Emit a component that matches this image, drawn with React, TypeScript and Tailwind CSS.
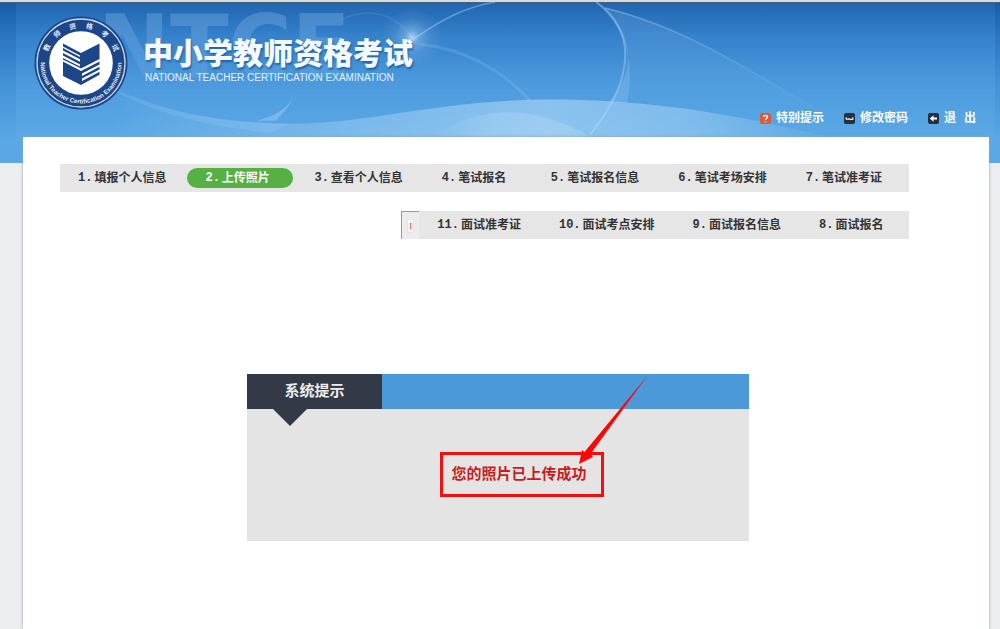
import React from "react";

type Step = { no: number; label: string; active?: boolean };

const writtenSteps: Step[] = [
  { no: 1, label: "填报个人信息" },
  { no: 2, label: "上传照片", active: true },
  { no: 3, label: "查看个人信息" },
  { no: 4, label: "笔试报名" },
  { no: 5, label: "笔试报名信息" },
  { no: 6, label: "笔试考场安排" },
  { no: 7, label: "笔试准考证" },
];

const interviewSteps: Step[] = [
  { no: 11, label: "面试准考证" },
  { no: 10, label: "面试考点安排" },
  { no: 9, label: "面试报名信息" },
  { no: 8, label: "面试报名" },
];

function Emblem() {
  return (
    <svg viewBox="0 0 94 94" className="h-[94px] w-[94px] shrink-0" role="img" aria-label="NTCE">
      <defs>
        <path id="arcTop" d="M12 47 A35 35 0 0 1 82 47" />
        <path id="arcBottom" d="M6.500 47 A40.500 40.500 0 0 0 87.500 47" />
      </defs>
      <circle cx="47" cy="47" r="46.500" fill="#1c4687" />
      <circle cx="47" cy="47" r="44" fill="none" stroke="#c3d8ef" strokeWidth="1.300" />
      <circle cx="47" cy="47" r="31.800" fill="#fff" />
      <text fill="#e3edf8" fontSize="7" fontWeight="700" fontFamily="'Noto Sans CJK SC', sans-serif">
        {["教", "师", "资", "格", "考", "试"].map((c, i) => (
          <textPath key={c} href="#arcTop" startOffset={`${13.5 + i * 14.6}%`} textAnchor="middle">
            {c}
          </textPath>
        ))}
      </text>
      <text fill="#e3edf8" fontSize="6.300" fontWeight="700" fontFamily="'Liberation Sans', sans-serif">
        <textPath href="#arcBottom" startOffset="50%" textAnchor="middle">
          National Teacher Certification Examination
        </textPath>
      </text>
      <g fill="#1c4687">
        <path d="M29 27.500 L47 37 L65.500 27.500 V43 L47 52.500 L29 43.500 V42 L46 50.500 V48.500 L29 39.500 V37 L46 45.800 V43.300 L29 34.500 V32 L46 41 V39.500 L29 30.500 Z" />
        <path d="M29 45.500 L47 55 L65.500 45.500 V48.500 L48 57.500 V60 L65.500 50.800 V53.600 L48 62.500 V65 L65.500 55.800 V58.800 L47 69 L29 60 Z" />
      </g>
    </svg>
  );
}

function HeaderScene() {
  return (
    <svg
      viewBox="0 0 1000 160"
      preserveAspectRatio="none"
      className="absolute inset-0 h-full w-full"
      aria-hidden="true"
    >
      <defs>
        <linearGradient id="sky" x1="0" y1="0" x2="0" y2="1">
          <stop offset="0" stopColor="#2064ae" />
          <stop offset="0.2" stopColor="#3480ca" />
          <stop offset="0.5" stopColor="#4c9add" />
          <stop offset="0.85" stopColor="#5ca9e6" />
          <stop offset="1" stopColor="#5ca7e3" />
        </linearGradient>
        <linearGradient id="edge" x1="0" y1="0" x2="0" y2="1">
          <stop offset="0" stopColor="#0a4c98" stopOpacity="0.35" />
          <stop offset="1" stopColor="#2f86d0" stopOpacity="0" />
        </linearGradient>
        <linearGradient id="mark" x1="0" y1="0" x2="0" y2="1">
          <stop offset="0" stopColor="#8fc0f0" stopOpacity="0.36" />
          <stop offset="1" stopColor="#8fc0f0" stopOpacity="0.1" />
        </linearGradient>
        <linearGradient id="hill" x1="0" y1="0" x2="1" y2="0">
          <stop offset="0" stopColor="#b0d8f7" stopOpacity="0" />
          <stop offset="0.35" stopColor="#b0d8f7" stopOpacity="0.4" />
          <stop offset="0.6" stopColor="#b0d8f7" stopOpacity="0.6" />
          <stop offset="0.8" stopColor="#b0d8f7" stopOpacity="0.45" />
          <stop offset="1" stopColor="#b0d8f7" stopOpacity="0" />
        </linearGradient>
        <linearGradient id="inner" x1="0" y1="0" x2="1" y2="0">
          <stop offset="0" stopColor="#d8ecfb" stopOpacity="0" />
          <stop offset="0.4" stopColor="#d8ecfb" stopOpacity="0.2" />
          <stop offset="1" stopColor="#d8ecfb" stopOpacity="0.2" />
        </linearGradient>
        <linearGradient id="wing" x1="0" y1="0" x2="1" y2="0">
          <stop offset="0" stopColor="#b9dcf8" stopOpacity="0.5" />
          <stop offset="1" stopColor="#b9dcf8" stopOpacity="0.05" />
        </linearGradient>
        <linearGradient id="veil" x1="0" y1="0" x2="0" y2="1">
          <stop offset="0" stopColor="#8ec4f1" stopOpacity="0.2" />
          <stop offset="1" stopColor="#8ec4f1" stopOpacity="0" />
        </linearGradient>
        <radialGradient id="flare">
          <stop offset="0" stopColor="#e4f4ff" stopOpacity="0.7" />
          <stop offset="0.25" stopColor="#b5dbf8" stopOpacity="0.35" />
          <stop offset="0.6" stopColor="#b5dbf8" stopOpacity="0.1" />
          <stop offset="1" stopColor="#b5dbf8" stopOpacity="0" />
        </radialGradient>
      </defs>
      <rect width="1000" height="160" fill="url(#sky)" />
      <rect width="16" height="160" fill="url(#edge)" />
      <rect x="995" width="5" height="160" fill="url(#edge)" />
      <rect width="1000" height="1" fill="#4b6078" />
      <text
        x="98"
        y="75"
        fontSize="86"
        fontWeight="700"
        fontFamily="'DejaVu Sans', sans-serif"
        fill="url(#mark)"
      >
        NTCE
      </text>
      <path d="M107 84 C150 102 200 120 290 121 C370 121 440 97 550 97 C670 97 760 118 840 137 L107 137 Z" fill="url(#hill)" />
      <path d="M107 84 C150 102 200 120 290 121 L270 130 C190 122 140 104 107 84 Z" fill="#b0d8f7" fillOpacity="0.16" />
      <path d="M430 137 C470 104 530 98 590 134 Z" fill="url(#inner)" />
      <path d="M297 89 C290 104 276 114 256 118 L276 118 C284 110 292 100 297 89 Z" fill="#b9dcf8" fillOpacity="0.35" />
      <path d="M605 6 C680 24 740 62 815 106 L815 120 L600 120 C640 70 630 30 605 6 Z" fill="url(#veil)" />
      <path d="M596 0 C632 25 640 65 609 99 L627 101 C636 60 625 25 596 0 Z" fill="#a5d1f6" fillOpacity="0.24" />
      <g fill="none" stroke="#b9dcf8" strokeOpacity="0.4" strokeWidth="1.500">
        <path d="M340 18 C370 4 395 12 412 35" strokeOpacity="0.12" />
        <path d="M412 38 C440 18 465 5 495 0" />
        <path d="M420 42 C460 46 500 65 530 98" strokeOpacity="0.16" strokeWidth="3" />
        <path d="M596 0 C632 25 640 70 590 132" strokeWidth="2" />
        <path d="M605 6 C680 24 740 62 815 106" stroke="url(#wing)" strokeOpacity="0.8" />
      </g>
      <circle cx="412" cy="35" r="30" fill="url(#flare)" />
    </svg>
  );
}

function HelpIcon() {
  return (
    <svg viewBox="0 0 11 11" className="h-[11px] w-[11px]" aria-hidden="true">
      <rect width="11" height="11" rx="2" fill="#dc5a3c" />
      <path d="M3.600 4 C3.600 1.800 7.500 1.800 7.500 4 C7.500 5.300 5.500 5.300 5.500 6.800 M5.500 8 V9.200" fill="none" stroke="#fff" strokeWidth="1.400" />
    </svg>
  );
}

function KeyIcon() {
  return (
    <svg viewBox="0 0 11 11" className="h-[11px] w-[11px]" aria-hidden="true">
      <rect width="11" height="11" rx="2" fill="#22303f" />
      <path d="M2.200 4.300 V6.200 H5 V5 M5.500 6.300 H8.800 V4.300" fill="none" stroke="#e8e8e8" strokeWidth="1.200" />
    </svg>
  );
}

function ExitIcon() {
  return (
    <svg viewBox="0 0 11 11" className="h-[11px] w-[11px]" aria-hidden="true">
      <rect width="11" height="11" rx="2" fill="#22303f" />
      <path d="M1.800 5.500 L5.500 2.200 V4.600 H9 V6.400 H5.500 V8.800 Z" fill="#fff" />
    </svg>
  );
}

function StepLink({ step }: { step: Step }) {
  return (
    <li>
      <a
        href="#"
        aria-current={step.active ? "step" : undefined}
        className={
          step.active
            ? "flex h-5 min-w-[106px] items-center rounded-full bg-[#57b044] px-[18px] text-white"
            : "flex h-5 min-w-[106px] items-center px-[18px] text-[#333]"
        }
      >
        <span className="mr-0.5 font-['Liberation_Mono',monospace]">{step.no}.</span>
        {step.label}
      </a>
    </li>
  );
}

export default function App() {
  return (
    <div className="flex min-h-screen flex-col bg-[#eceef2] font-['Liberation_Sans','Noto_Sans_CJK_SC',sans-serif] text-xs font-bold">
      <header className="relative h-[163px] shrink-0 border-t-2 border-[#d3dbe3]">
        <HeaderScene />
        <div className="relative flex items-start justify-between pr-6 pl-[34px]">
          <div className="flex items-start gap-[15px] pt-3.5">
            <Emblem />
            <div className="pt-[22px]">
              <h1 className="text-[30px] leading-8 font-black text-[#f2faff] [text-shadow:1px_2px_2px_#2463a0]">
                中小学教师资格考试
              </h1>
              <p className="pl-0.5 text-[10px] leading-4 font-normal text-[#e3f2ff]">
                NATIONAL TEACHER CERTIFICATION EXAMINATION
              </p>
            </div>
          </div>
          <nav className="flex gap-5 pt-[108px] leading-4 text-white">
            <a href="#" className="flex items-center gap-[5px]">
              <HelpIcon />
              特别提示
            </a>
            <a href="#" className="flex items-center gap-[5px]">
              <KeyIcon />
              修改密码
            </a>
            <a href="#" className="flex items-center gap-[5px]">
              <ExitIcon />
              <span className="flex gap-2">
                <span>退</span>
                <span>出</span>
              </span>
            </a>
          </nav>
        </div>
      </header>

      <main className="relative -mt-[26px] mr-[11px] ml-[23px] flex-1 bg-white pt-[27px] shadow-[0_0_3px_#8fa3b5]">
        <nav className="mr-20 ml-[37px] flex flex-col items-end gap-[19px]">
          <ol className="flex h-7 w-full items-center gap-[3px] bg-[#e6e6e6]">
            {writtenSteps.map((s) => (
              <StepLink key={s.no} step={s} />
            ))}
          </ol>
          <div className="flex h-7 bg-[#e6e6e6] pr-0.5">
            <div className="flex w-[18px] items-center justify-center border-t border-l border-[#999] bg-[#ececec]">
              <span className="border border-[#f3dede] bg-[#faf4f4] px-px font-['Liberation_Serif',serif] text-[9px] leading-3 font-normal text-[#e04040]">
                I
              </span>
            </div>
            <ol className="flex items-center gap-0.5">
              {interviewSteps.map((s) => (
                <StepLink key={s.no} step={s} />
              ))}
            </ol>
          </div>
        </nav>

        <div className="pt-[135px] pr-4">
          <section className="relative mx-auto w-full max-w-[502px] bg-[#e4e4e4] text-[15px]">
            <div className="flex h-[35px] bg-[#4c99da]">
              <h2 className="flex w-[135px] items-center justify-center bg-[#343947] pb-0.5 text-[#eee]">
                系统提示
              </h2>
            </div>
            <svg viewBox="0 0 34 17" className="ml-[26px] h-[17px] w-[34px]" aria-hidden="true">
              <path d="M0 0 H34 L17 17 Z" fill="#343947" />
            </svg>
            <div className="flex justify-center pt-[26px] pb-11 pl-12">
              <p className="border-[3px] border-[#f01010] pt-2 pr-[14px] pb-2.5 pl-2 leading-[21px] text-[#c91c1c]">
                您的照片已上传成功
              </p>
            </div>
            <svg
              viewBox="0 0 70 90"
              className="absolute top-0 left-[332px] h-[90px] w-[70px]"
              aria-hidden="true"
            >
              <path d="M69 1 L11.500 80 L14 83 L0 90 L3 76 L5.500 78 Z" fill="#f80808" />
            </svg>
          </section>
        </div>
      </main>
    </div>
  );
}
